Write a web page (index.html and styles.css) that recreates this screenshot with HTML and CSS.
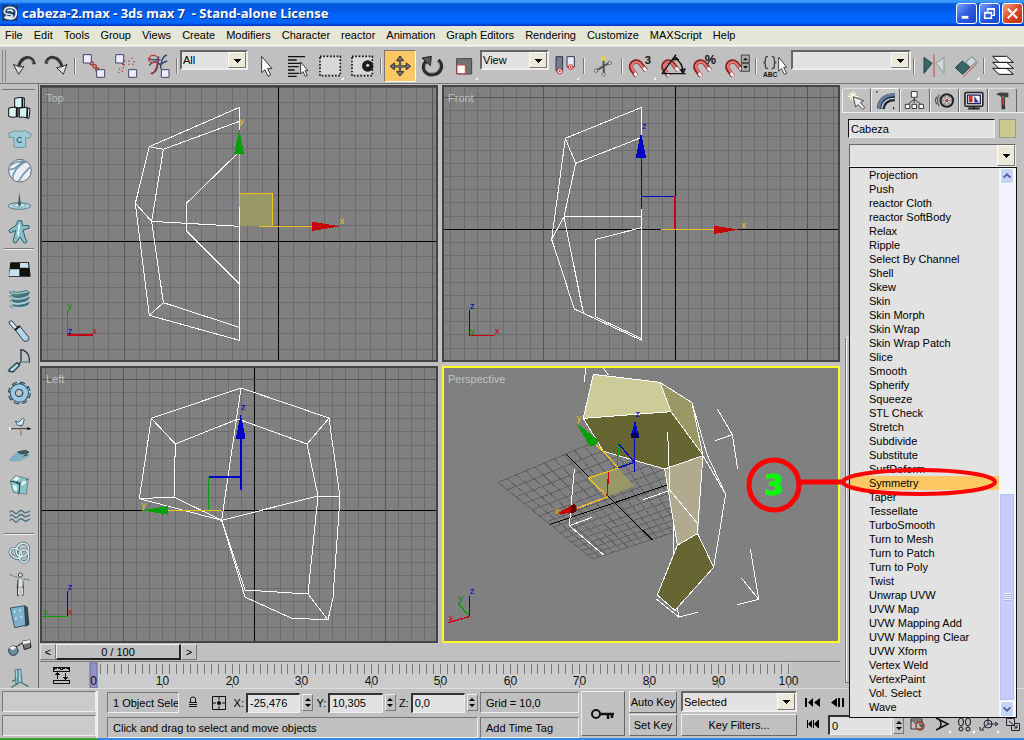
FILE: index.html
```html
<!DOCTYPE html>
<html lang="en">
<head>
<meta charset="utf-8">
<title>cabeza-2.max - 3ds max 7 - Stand-alone License</title>
<link rel="stylesheet" href="styles.css">
</head>
<body>
<div class="app">
  <header class="titlebar">
    <svg class="logo" viewBox="0 0 48 48" aria-hidden="true"><rect width="48" height="48" rx="4" fill="#1d3f6c"/><path d="M40 14C34 4 8 4 7 20c0 12 22 4 24 12 0 6-12 6-20 0M41 14c4 8 3 24-10 27-10 2-18 0-24-5M16 19c4-6 16-5 16 3" fill="none" stroke="#e4f1f5" stroke-width="5"/></svg>
    <h1 class="caption">cabeza-2.max - 3ds max 7 &nbsp;- Stand-alone License</h1>
    <div class="winbuttons">
      <button class="win" aria-label="Minimize"><svg viewBox="0 0 20 20"><path d="M5 14h7" stroke="#fff" stroke-width="3"/></svg></button>
      <button class="win" aria-label="Restore"><svg viewBox="0 0 20 20"><path d="M8 8V5h7v7h-3M5 9h7v6H5zM5 9.500h7M8 5.500h7" fill="none" stroke="#fff" stroke-width="1.500"/></svg></button>
      <button class="win win-close" aria-label="Close"><svg viewBox="0 0 20 20"><path d="M5 5l10 10M15 5L5 15" stroke="#fff" stroke-width="2.200"/></svg></button>
    </div>
  </header>

  <nav class="menubar">
    <a href="#">File</a><a href="#">Edit</a><a href="#">Tools</a><a href="#">Group</a><a href="#">Views</a><a href="#">Create</a><a href="#">Modifiers</a><a href="#">Character</a><a href="#">reactor</a><a href="#">Animation</a><a href="#">Graph Editors</a><a href="#">Rendering</a><a href="#">Customize</a><a href="#">MAXScript</a><a href="#">Help</a>
  </nav>

  <div class="toolbar">
    <span class="handle"></span>
    <button class="tool" aria-label="Undo"><svg viewBox="24 147 96 96"><path d="M103 190C98 160 64 164 56 197" fill="none" stroke="#333" stroke-width="10"/><path d="M99 184C91 168 70 172 62 197" fill="none" stroke="#aaa" stroke-width="3"/><path d="M40 190l16 30 16-24-12 2z" fill="#ddd" stroke="#333" stroke-width="3"/></svg></button>
    <button class="tool" aria-label="Redo"><svg viewBox="120 147 96 96"><path d="M138 188c6-28 38-24 48 9" fill="none" stroke="#333" stroke-width="10"/><path d="M141 184c9-16 30-12 39 10" fill="none" stroke="#aaa" stroke-width="3"/><path d="M170 200l20 20 11-30-14 7z" fill="#ddd" stroke="#333" stroke-width="3"/></svg></button>
    <span class="sep"></span>
    <button class="tool" aria-label="Select and Link"><svg viewBox="234 147 96 96"><g fill="none" stroke="#a33" stroke-width="4"><circle cx="275" cy="187" r="5"/><circle cx="284" cy="196" r="5"/><circle cx="292" cy="206" r="5"/></g><g fill="#eef" stroke="#446" stroke-width="3"><path d="M250 161h24v25h-24zM290 206h24v23h-24z"/></g></svg></button>
    <button class="tool" aria-label="Unlink Selection"><svg viewBox="330 147 96 96"><path d="M374 192c-12-2-8-14 2-12" fill="none" stroke="#a33" stroke-width="4"/><path d="M385 180h4m5-8h4m2 10h5m-20 8h4m8 0h4m-44 14h4m4 6h4m-15 4h4m10-14h4" stroke="#b44" stroke-width="4"/><g fill="#eef" stroke="#446" stroke-width="3"><path d="M347 161h24v25h-24zM386 206h24v23h-24z"/></g></svg></button>
    <button class="tool" aria-label="Bind to Space Warp"><svg viewBox="426 147 96 96"><path d="M447 194c25-30 30 10 38-10c2-12 8-20 16-22M452 217c26 0 20-35 24-51" fill="none" stroke="#247" stroke-width="4"/><path d="M446 172c10 10 28 0 36 6M484 204c-8-14 6-20 18-24" fill="none" stroke="#346" stroke-width="4"/><ellipse cx="460" cy="174" rx="14" ry="11" fill="none" stroke="#c33" stroke-width="4"/><path d="M472 182c0 20-8 30-16 38" fill="none" stroke="#b33" stroke-width="4"/><path d="M484 206h23v23h-23z" fill="#eef" stroke="#446" stroke-width="3"/></svg></button>
    <span class="sep"></span>
    <span class="combo combo-filter"><select aria-label="Selection Filter"><option>All</option></select></span>
    <button class="tool" aria-label="Select Object"><svg viewBox="750 147 96 96"><path d="M785 166v49l10-9 9 20 8-4-9-19h13z" fill="#fff" stroke="#333" stroke-width="3"/></svg></button>
    <button class="tool" aria-label="Select by Name"><svg viewBox="846 147 96 96"><path d="M864 167h51M864 177h26M864 187h42M864 197h32M864 207h20M864 217h34M864 226h26" stroke="#111" stroke-width="4"/><path d="M902 183v36l7-7 7 14 6-3-7-14h9z" fill="#fff" stroke="#333" stroke-width="3"/></svg></button>
    <button class="tool" aria-label="Rectangular Selection Region"><svg viewBox="942 147 96 96"><path d="M960 166h61v58h-61z" fill="#d8d8d8" stroke="#111" stroke-width="5" stroke-dasharray="5 5"/><path d="M1032 228v8h-9z" fill="#fff"/></svg></button>
    <button class="tool" aria-label="Window / Crossing"><svg viewBox="1038 147 96 96"><path d="M1056 166h61v58h-61z" fill="#d8d8d8" stroke="#111" stroke-width="5" stroke-dasharray="5 5"/><circle cx="1103" cy="195" r="17" fill="#1a1a1a"/><circle cx="1103" cy="193" r="5" fill="#ccc"/></svg></button>
    <span class="sep"></span>
    <button class="tool tool-active" aria-label="Select and Move" aria-pressed="true"><svg viewBox="14 149 96 96"><path d="M62 170v55M34 198h57" stroke="#333" stroke-width="7"/><path d="M51 180l11-15 12 15zM51 215l11 14 12-14zM44 187l-14 11 14 11zM82 187l14 11-14 11z" fill="#777" stroke="#222" stroke-width="3"/><path d="M62 178v40M42 198h42" stroke="#999" stroke-width="2"/></svg></button>
    <button class="tool" aria-label="Select and Rotate"><svg viewBox="108 147 96 96"><path d="M139 181c-17 18-5 40 17 40 28-1 36-28 19-44" fill="none" stroke="#2b2b2b" stroke-width="11"/><path d="M138 188c-7 17 3 28 17 28 19 0 29-17 20-34" fill="none" stroke="#999" stroke-width="3"/><path d="M126 171l28-5-3 28z" fill="#555" stroke="#222" stroke-width="3"/></svg></button>
    <button class="tool" aria-label="Select and Scale"><svg viewBox="204 147 96 96"><path d="M230 173h45v46h-45z" fill="#737373" stroke="#444" stroke-width="3"/><path d="M231 192h25v26h-25z" fill="#fff" stroke="#c44" stroke-width="3"/><path d="M294 228v8h-8z" fill="#fff"/></svg></button>
    <span class="combo combo-coord"><select aria-label="Reference Coordinate System"><option>View</option></select></span>
    <button class="tool" aria-label="Use Pivot Point Center"><svg viewBox="509 147 96 96"><path d="M530 167h20v43h-20z" fill="#7a7a8c" stroke="#335" stroke-width="3"/><path d="M563 167h22v31h-22z" fill="#e5ebf5" stroke="#335" stroke-width="3"/><g fill="#fff" stroke="#c22" stroke-width="3"><circle cx="541" cy="211" r="8"/><circle cx="574" cy="198" r="7"/></g><circle cx="541" cy="211" r="3" fill="#c22"/><circle cx="574" cy="198" r="3" fill="#c22"/><path d="M600 228v8h-8z" fill="#fff"/></svg></button>
    <span class="sep"></span>
    <button class="tool" aria-label="Select and Manipulate"><svg viewBox="623 147 96 96"><path d="M672 176l2 44M650 209l42-25" stroke="#555" stroke-width="6"/><circle cx="671" cy="173" r="7" fill="#edcf3e"/><g fill="#ddd" stroke="#666" stroke-width="3"><circle cx="650" cy="209" r="5"/><circle cx="691" cy="186" r="5"/><circle cx="673" cy="220" r="5"/></g></svg></button>
    <span class="sep"></span>
    <button class="tool" aria-label="3D Snap Toggle"><svg viewBox="735 147 96 96"><g id="magnet" fill="none"><path d="M798 209L781 187C767 172 746 189 755 205L770 226" stroke="#7a2020" stroke-width="13"/><path d="M797 208L780 188C767 175 749 190 757 204L771 225" stroke="#e87470" stroke-width="7"/><path d="M798 209l-7-9M770 225l-6-9" stroke="#fff" stroke-width="9"/></g><text class="glyph" x="794" y="190" font-size="34">3</text><path d="M828 228v8h-8z" fill="#fff"/></svg></button>
    <button class="tool" aria-label="Angle Snap Toggle"><svg viewBox="831 147 96 96"><use href="#magnet" x="97"/><path d="M845 218h72M846 218l42-57M884 172q26 12 24 44M878 176l6-10 10 9zM902 206l7 11 6-13z" fill="none" stroke="#111" stroke-width="4"/></svg></button>
    <button class="tool" aria-label="Percent Snap Toggle"><svg viewBox="927 147 96 96"><use href="#magnet" x="193"/><text class="glyph" x="974" y="189" font-size="38">%</text></svg></button>
    <button class="tool" aria-label="Spinner Snap Toggle"><svg viewBox="1023 147 96 96"><use href="#magnet" x="289"/><path d="M1084 162h24v23h-24zM1084 188h24v23h-24z" fill="#aaa" stroke="#444" stroke-width="3"/><path d="M1089 178l7-8 8 8zM1089 195l7 8 8-8z" fill="#111"/></svg></button>
    <span class="sep"></span>
    <button class="tool" aria-label="Named Selection Sets"><svg viewBox="60 147 96 96"><path d="M87 166q-8 0-8 8v6q0 5-6 5 6 0 6 5v6q0 7 8 7M98 166q8 0 8 8v6q0 5 6 5-6 0-6 5v6q0 7-8 7" fill="none" stroke="#444" stroke-width="4"/><text x="72" y="229" font-size="20" class="glyph">ABC</text><path d="M119 168v43l8-8 9 17 7-3-9-18h9z" fill="#fff" stroke="#444" stroke-width="3"/></svg></button>
    <span class="combo combo-sets"><select aria-label="Named Selection Set"><option></option></select></span>
    <span class="sep"></span>
    <button class="tool" aria-label="Mirror"><svg viewBox="531 147 96 96"><path d="M552 169v48l24-30z" fill="#386866" stroke="#243c3c" stroke-width="3"/><path d="M612 169v48l-24-30z" fill="#ccd8da" stroke="#899" stroke-width="3"/><path d="M582 160v68" stroke="#c44" stroke-width="3"/></svg></button>
    <button class="tool" aria-label="Align"><svg viewBox="627 147 96 96"><path d="M677 184l18-17 15 14-19 17z" fill="#ccd8da" stroke="#677" stroke-width="3"/><path d="M646 200l21-20 22 20-21 20z" fill="#386866" stroke="#243c3c" stroke-width="3"/><path d="M671 227l42-42" stroke="#c44" stroke-width="3"/><path d="M719 228v8h-10z" fill="#fff"/></svg></button>
    <span class="sep"></span>
    <button class="tool" aria-label="Layer Manager"><svg viewBox="745 147 96 96"><g fill="#fff" stroke="#111" stroke-width="3"><path d="M762 202h42l20 18h-43z"/><path d="M762 184h42l20 18h-43z"/><path d="M762 166h42l20 18h-43z"/></g></svg></button>
  </div>

  <main class="workspace">
    <div class="sidebar">
      <button class="side" aria-label="Rigid Body Collection"><svg viewBox="10 21 93 93"><g fill="#d6f2f5" stroke="#111" stroke-width="3"><path d="M42 40l18-3 11 2v28l-19 2-10-2zM24 69l20-3 8 3v26l-18 2-10-3zM56 69l22-2 10 4-3 29-19-4-10 1z"/></g><path d="M65 38v29M48 69v27M80 69l-1 29" stroke="#111" stroke-width="5"/></svg></button>
      <button class="side" aria-label="Cloth Collection"><svg viewBox="10 114 93 93"><path d="M24 144l20-7q12 5 28 0l20 10-5 13-12-2v28q-18 4-35 0v-29l-14 1z" fill="#9dcbd6" stroke="#51838e" stroke-width="2"/><path d="M64 159q-13-6-15 6 2 12 15 5" fill="none" stroke="#417583" stroke-width="4"/></svg></button>
      <button class="side" aria-label="Soft Body Collection"><svg viewBox="10 207 93 93"><circle cx="58" cy="257" r="34" fill="#e8eef4" stroke="#667" stroke-width="3"/><path d="M28 242q22-18 50-10M36 282q0-30 37-52M53 290q13-23 34-43M68 226q-23 30-44 28" fill="none" stroke="#7396aa" stroke-width="5"/></svg></button>
      <button class="side" aria-label="Water"><svg viewBox="10 300 93 93"><ellipse cx="56" cy="363" rx="34" ry="10" fill="#a7d2df" stroke="#58808b" stroke-width="3"/><ellipse cx="56" cy="361" rx="18" ry="5" fill="#e8f5f6" stroke="#58808b" stroke-width="2"/><path d="M56 322l-4 40h9z" fill="#355964"/></svg></button>
      <button class="side" aria-label="Deforming Mesh"><svg viewBox="10 393 93 93"><path d="M52 407h11l2 14 20 1v8l-18 5 6 22 6 14-8 4-13-18-13 18-8-5 8-34-16 8-5-8 22-15z" fill="#88bcc9" stroke="#365d69" stroke-width="3"/><path d="M56 418l-4 35" stroke="#dff" stroke-width="5"/></svg></button>
      <span class="side-sep"></span>
      <button class="side" aria-label="Plane"><svg viewBox="10 504 93 93"><path d="M29 532h56l5 43H24z" fill="#111"/><path d="M58 534h24l2 14H58zM28 553h28v20H25z" fill="#c9e1ee"/></svg></button>
      <button class="side" aria-label="Spring"><svg viewBox="10 597 93 93"><g fill="none" stroke="#46717c" stroke-width="10"><path d="M82 619c-25 9-52 7-51-1M82 619c2 16-48 22-51 12M82 635c-2 14-48 18-51 10M82 650c-2 14-48 18-51 10"/></g><g fill="none" stroke="#a8d0d6" stroke-width="4"><path d="M82 619c-25 9-52 7-51-1M82 635c-20 10-48 8-51-3M82 650c-20 10-48 8-51-4M82 663c-20 8-48 6-51-3"/></g></svg></button>
      <button class="side" aria-label="Linear Dashpot"><svg viewBox="10 690 93 93"><path d="M25 710l8-3 20 23-8 7-18-20z" fill="#cfe5ef" stroke="#244" stroke-width="3"/><path d="M44 735l13-12 28 35-4 10-11 1z" fill="#b5d5e9" stroke="#244" stroke-width="3"/><path d="M43 735l14-12" stroke="#111" stroke-width="6"/></svg></button>
      <button class="side" aria-label="Angular Dashpot"><svg viewBox="10 -42 93 93"><path d="M61 6V-31q22 3 25 28v9H61l-7 6" fill="none" stroke="#234" stroke-width="4"/><path d="M61 6h25" stroke="#b5d5e9" stroke-width="3"/><path d="M27 27l22-19 8 8-20 20-13-3z" fill="#b5d5e9" stroke="#244" stroke-width="4"/></svg></button>
      <button class="side" aria-label="Motor"><svg viewBox="10 51 93 93"><circle cx="56" cy="99" r="29" fill="none" stroke="#274b60" stroke-width="11" stroke-dasharray="14 9"/><circle cx="56" cy="99" r="28" fill="none" stroke="#9cc8e0" stroke-width="6" stroke-dasharray="12 11"/><circle cx="56" cy="99" r="20" fill="none" stroke="#274b60" stroke-width="18"/><circle cx="56" cy="99" r="19" fill="none" stroke="#9cc8e0" stroke-width="14"/><circle cx="55" cy="99" r="11" fill="#c0c0c0" stroke="#274b60" stroke-width="3"/></svg></button>
      <button class="side" aria-label="Wind"><svg viewBox="10 144 93 93"><path d="M22 206h68" stroke="#333" stroke-width="3"/><path d="M61 190v37" stroke="#a77" stroke-width="4"/><path d="M44 183l10 4 12-12 5 3-5 18H50z" fill="#cfeef2" stroke="#467" stroke-width="3"/><circle cx="27" cy="206" r="4" fill="#fff"/><path d="M80 201l11 5-11 5z"/></svg></button>
      <button class="side" aria-label="Toy Car"><svg viewBox="10 237 93 93"><path d="M25 300q14-23 39-28l19 5 3 11-26 15-30 2z" fill="#82aec2"/><path d="M51 276l24-5 10 6-22 5zM68 289q6-8 13-4" fill="#465b69" stroke="#344" stroke-width="3"/></svg></button>
      <button class="side" aria-label="Fracture"><svg viewBox="10 330 93 93"><path d="M29 364l15-17 39 10-6 46-39-6z" fill="#8ac5c6" stroke="#567" stroke-width="2"/><path d="M29 363l29 7 23-12M55 351l-7 18 10 5-4 29" fill="none" stroke="#234" stroke-width="3"/><path d="M37 359l10-10 10 4-6 11zM62 366l14-7-2 12-12 6zM36 374l12 3 2 16-11-2z" fill="#dffafa"/></svg></button>
      <button class="side" aria-label="Water Surface"><svg viewBox="10 423 93 93"><path d="M27 457q6-9 13 0t14-2q7-7 14 0t20-3M27 469q6-9 13 0t14-2q7-7 14 0t20-3M27 482q6-9 13 0t14-2q7-7 14 0t20-3" fill="none" stroke="#456f7c" stroke-width="4"/></svg></button>
      <span class="side-sep"></span>
      <button class="side" aria-label="Constraint Solver"><svg viewBox="10 534 93 93"><g fill="none" stroke="#3c606b" stroke-width="9"><ellipse cx="65" cy="570" rx="18" ry="21" transform="rotate(30 65 570)"/><ellipse cx="46" cy="580" rx="13" ry="19" transform="rotate(-60 46 580)"/><ellipse cx="70" cy="588" rx="14" ry="19"/></g><g fill="none" stroke="#d7e8ec" stroke-width="5"><ellipse cx="65" cy="570" rx="18" ry="21" transform="rotate(30 65 570)"/><ellipse cx="46" cy="580" rx="13" ry="19" transform="rotate(-60 46 580)"/><ellipse cx="70" cy="588" rx="14" ry="19"/></g></svg></button>
      <button class="side" aria-label="Rag Doll Constraint"><svg viewBox="10 627 93 93"><path d="M27 644l32 12 30 4" fill="none" stroke="#566" stroke-width="3" stroke-dasharray="6 3"/><path d="M53 659l-2 20 1 30M65 659l2 23-1 25" fill="none" stroke="#344" stroke-width="5"/><path d="M54 656h12v24H53zM52 684h4v20h-4zM63 684h4v20h-4z" fill="#ddd"/><circle cx="59" cy="645" r="6" fill="#dee" stroke="#344" stroke-width="3"/></svg></button>
      <button class="side" aria-label="Hinge Constraint"><svg viewBox="10 720 93 93"><path d="M29 744l45-7 10 57-42 9z" fill="#7fb1cc" stroke="#356" stroke-width="3"/><path d="M70 738l11 2 5 53-12 8z" fill="#304650"/><path d="M40 755h4m12-4h4m-16 25h4m12-5h4" stroke="#dff" stroke-width="5"/></svg></button>
      <button class="side" aria-label="Point-Point Constraint"><svg viewBox="10 -12 93 93"><circle cx="38" cy="47" r="14" fill="#6b8f9a" stroke="#234" stroke-width="3"/><path d="M35 33l-10 6 12 7 11-9z" fill="#eee"/><path d="M46 36l22-14" stroke="#111" stroke-width="4" stroke-dasharray="5 3"/><path d="M65 19l22-4 4 22-20 7z" fill="#777" stroke="#222" stroke-width="3"/><path d="M65 19l22-4 2 8-22 5z" fill="#eee"/></svg></button>
      <button class="side" aria-label="Prismatic Constraint"><svg viewBox="10 75 93 93"><path d="M43 99l17-3 4 39-18 6z" fill="#a8d8df" stroke="#477" stroke-width="3"/><path d="M52 98v40M59 135l25 14M52 139l-20 12M47 127l-13 6" stroke="#477" stroke-width="4"/></svg></button>
    </div>

    <div class="center">
      <div class="viewports">
        <section class="viewport">
          <h2 class="vp-label">Top</h2>
          <svg class="scene" viewBox="126 6 1182 819" preserveAspectRatio="xMidYMid slice">
            <g class="grid" data-cx="835" data-cy="469" data-step="46.2"></g>
            <path class="wire" d="M718 67L448 185 406 355 448 691 718 766V67M718 109L490 193 455 409 490 653 718 727M448 185l42 8M406 355l49 54M448 691l42-38M455 409l263 15M718 200L559 355v82L718 597"/>
            <path d="M719 325h99v99h-99z" fill="#989866"/>
            <path class="gold" d="M718 325h100v99M718 367V205M778 424h160"/>
            <path d="M718 131l-16 76h30z" fill="#00a000"/><path d="M936 410l84 14-84 14z" fill="#c80000"/>
            <text x="718" y="117" fill="#edc414">y</text><text x="1019" y="417" fill="#edc414">x</text>
            <path class="g" d="M202 750v-76"/><path class="r" d="M202 750h78"/>
            <text x="202" y="671" fill="#008c00">y</text><text x="277" y="746" fill="#c80014">x</text><text x="203" y="746" fill="#0000c8">z</text>
          </svg>
        </section>
        <section class="viewport">
          <h2 class="vp-label">Front</h2>
          <svg class="scene" viewBox="12 6 1182 819" preserveAspectRatio="xMidYMid slice">
            <g class="grid" data-cx="706" data-cy="433" data-step="39.6"></g>
            <path class="wire" d="M605 67L376 160 335 463 403 672 605 766V67M605 157L407 235 372 395 430 684M376 160l31 75M372 395h233M372 395L335 463M605 428L467 463v233L605 761"/>
            <path class="b" d="M605 373V205M605 334h101"/><path class="r" d="M705 334v98"/><path class="gold" d="M664 433h160"/>
            <path d="M603 142l-16 76h31z" fill="#0000c8"/><path d="M822 422l74 12-74 13z" fill="#c80000"/>
            <text x="606" y="132" fill="#0000c8">z</text><text x="904" y="428" fill="#edc414">x</text>
            <path class="b" d="M88 751v-75"/><path class="r" d="M88 751h78"/>
            <text x="90" y="671" fill="#0000c8">z</text><text x="164" y="747" fill="#c80014">x</text><text x="90" y="747" fill="#008c00">y</text>
          </svg>
        </section>
        <section class="viewport">
          <h2 class="vp-label">Left</h2>
          <svg class="scene" viewBox="126 24 1182 819" preserveAspectRatio="xMidYMid slice">
            <g class="grid" data-cx="763" data-cy="451" data-step="39.2"></g>
            <path class="wire" d="M454 175L723 84 987 174 1020 411 999 714 984 780 873 774 735 711 665 481 418 416zM526 252L714 177 921 252 954 408 924 702 735 690 665 481 522 411zM454 175l72 77M418 416l104-5 143 70M723 84L665 481l289-73h66M987 174l-66 78M924 702l60 78"/>
            <path class="b" d="M723 390V230M723 351h-97"/><path class="g" d="M626 351v100"/><path class="gold" d="M500 451h165"/>
            <path d="M722 162l-15 76h30z" fill="#0000c8"/><path d="M424 451l80-13v26z" fill="#00a000"/>
            <text x="723" y="151" fill="#0000c8">z</text><text x="424" y="443" fill="#edc414">y</text>
            <path class="b" d="M202 769v-76"/><path class="g" d="M202 769h-72"/>
            <text x="203" y="689" fill="#0000c8">z</text><text x="130" y="765" fill="#008c00">y</text><text x="203" y="765" fill="#c80014">x</text>
          </svg>
        </section>
        <section class="viewport viewport-active">
          <h2 class="vp-label">Perspective</h2>
          <svg class="scene" viewBox="12 9 1182 819" preserveAspectRatio="xMidYMid slice">
            <g class="persp-grid"></g>
            <path class="axis" d="M378 267L638 526M331 478L681 360"/>
            <path d="M445 339l91-30 46 54-81 33z" fill="#989866"/>
            <path class="wire" d="M403 312L388 482l68-25M388 482l103 88"/>
            <path d="M660 52l96 61 33 157-96-130z" fill="#999966"/>
            <path d="M460 28l200 24 33 88-263 20z" fill="#cccc99"/>
            <path d="M430 160l263-20 96 130-115 42-184-53z" fill="#666633"/>
            <path d="M674 312l115-40-14 234-63 35z" fill="#b2aa8e"/>
            <path d="M712 541l60-37 49 103-116 129-53-46z" fill="#666633"/>
            <path class="wire" d="M436 9l-2 41M490 9l16 22M460 28l200 24 33 88-263 20zM660 52l96 61 45 155 56 120-36 219-49-103 17-234-96-130M756 113l33 159 68 116M430 160l60 99 184 53 115-40M674 312l38 229 60-35M712 541l-60 149 53 46 116-129M683 201l7 175-80 28M690 376l83 100M700 480v90M649 702l67 54 58-14M716 756l-4-30M832 132l45 77-51 18M877 209l16 103M931 551l25 152-64 16M956 703l-52-64"/>
            <path class="gold" d="M468 237l68 72-91 30 56 57-96 36"/><path class="g" d="M536 236l-4 67"/><path class="r" d="M506 322l-5 71"/><path class="b" d="M536 236l47 56v-74M583 292v28M583 292l-48 17"/>
            <path d="M409 174l40 70q20 0 27-17z" fill="#00a000"/><path d="M585 164l-13 53q12 5 25 0z" fill="#0000c8"/><path d="M572 204h25v14q-13 4-25 0z" fill="#000064"/><path d="M345 449l58-33q12 12 4 26z" fill="#c80000"/><path d="M403 416q10 10 4 26l-14 2q-4-14 2-24z" fill="#640000"/>
            <text x="586" y="155" fill="#0000c8">z</text><text x="410" y="167" fill="#edc414">y</text><text x="344" y="446" fill="#edc414">x</text>
            <path class="b" d="M88 755v-63"/><path class="g" d="M88 755l-34-42"/><path class="r" d="M88 755l-64 18"/>
            <text x="89" y="688" fill="#0000c8">z</text><text x="55" y="708" fill="#008c00">y</text><text x="26" y="767" fill="#c80014">x</text>
          </svg>
        </section>
      </div>
      <div class="slider">
        <button class="step" aria-label="Previous frame">&lt;</button><button class="thumb">0 / 100</button><button class="step" aria-label="Next frame">&gt;</button>
      </div>
      <div class="timeline">
        <svg viewBox="40 662 800 26" preserveAspectRatio="xMinYMid meet" role="img" aria-label="Time ruler">
          <rect x="98" y="662" width="693" height="26" fill="#cbcbcb"/>
          <g class="curve"><path d="M53.500 671.500v-4h16v4zM53.500 669.500l4-2 4 2 4-2 4 2M53.500 683v-3h16v3zM57.500 679v-6m-2 2l2-2 2 2M65.500 673v6m-2-2l2 2 2-2"/></g>
          <rect x="90" y="663" width="7" height="25" fill="#9292c8" stroke="#6a6aa4"/>
          <g class="ticks"></g>
        </svg>
      </div>
    </div>

    <aside class="command">
      <div class="tabs" role="tablist">
        <button class="tab" role="tab" aria-label="Create"><svg viewBox="312 264 84 72"><path d="M342 271v32M326 287h32M332 277l20 20M352 277l-20 20" stroke="#fffbe0" stroke-width="4"/><path d="M343 288l8 32 8-7 14 15 7-6-14-15 10-6z" fill="#eee" stroke="#444" stroke-width="3"/></svg></button>
        <button class="tab tab-on" role="tab" aria-label="Modify" aria-selected="true"><svg viewBox="396 264 84 72"><path d="M423 326q4-36 44-36" fill="none" stroke="#20262f" stroke-width="25"/><path d="M417 324q4-42 50-42" fill="none" stroke="#687f9f" stroke-width="9"/><path d="M426 325q4-32 40-32" fill="none" stroke="#c8d4e4" stroke-width="4"/><path d="M411 270v6M463 321v6" stroke="#222" stroke-width="4"/></svg></button>
        <button class="tab" role="tab" aria-label="Hierarchy"><svg viewBox="484 264 84 72"><path d="M525 292v16M525 296l-22 18M525 296l24 18" stroke="#333" stroke-width="3"/><path d="M516 272h18v18h-18zM497 312h14v13h-14zM518 312h14v13h-14zM540 312h14v13h-14z" fill="#fff" stroke="#333" stroke-width="3"/></svg></button>
        <button class="tab" role="tab" aria-label="Motion"><svg viewBox="570 264 84 72"><path d="M587 288q-8 12 0 24M595 282q-10 18 0 36" fill="none" stroke="#333" stroke-width="3"/><circle cx="619" cy="300" r="20" fill="#999" stroke="#222" stroke-width="6"/><path d="M619 286v28M606 293l26 14M632 293l-26 14" stroke="#eee" stroke-width="3"/><circle cx="619" cy="300" r="5" fill="#b33"/></svg></button>
        <button class="tab" role="tab" aria-label="Display"><svg viewBox="656 264 84 72"><rect x="671" y="275" width="56" height="43" rx="4" fill="#ddd" stroke="#222" stroke-width="5"/><path d="M679 283h40v27h-40z" fill="#fff" stroke="#225" stroke-width="4"/><path d="M683 286h12v20h-12z" fill="#c33"/><path d="M700 306v-20l15 20z" fill="#33a"/><path d="M681 325h36M699 319v6" stroke="#222" stroke-width="6"/></svg></button>
        <button class="tab" role="tab" aria-label="Utilities"><svg viewBox="741 264 84 72"><path d="M763 283q3-9 14-8l24 1v14h-12l-4-3-5 3-10-7z" fill="#444"/><path d="M779 290h11l1 37h-11z" fill="#333"/><path d="M782 292h5l1 22h-6z" fill="#d33"/></svg></button>
      </div>
      <div class="panel">
        <div class="name-row"><input class="name" type="text" value="Cabeza" aria-label="Object name"><button class="swatch" aria-label="Object color"></button></div>
        <div class="mod">
          <span class="combo combo-mod"><select aria-label="Modifier List"><option></option></select></span>
          <div class="dropdown">
            <ul class="modlist" role="listbox" aria-label="Modifiers">
              <li role="option">Projection</li><li role="option">Push</li><li role="option">reactor Cloth</li><li role="option">reactor SoftBody</li><li role="option">Relax</li><li role="option">Ripple</li><li role="option">Select By Channel</li><li role="option">Shell</li><li role="option">Skew</li><li role="option">Skin</li><li role="option">Skin Morph</li><li role="option">Skin Wrap</li><li role="option">Skin Wrap Patch</li><li role="option">Slice</li><li role="option">Smooth</li><li role="option">Spherify</li><li role="option">Squeeze</li><li role="option">STL Check</li><li role="option">Stretch</li><li role="option">Subdivide</li><li role="option">Substitute</li><li role="option">SurfDeform</li><li role="option" class="on" aria-selected="true">Symmetry</li><li role="option">Taper</li><li role="option">Tessellate</li><li role="option">TurboSmooth</li><li role="option">Turn to Mesh</li><li role="option">Turn to Patch</li><li role="option">Turn to Poly</li><li role="option">Twist</li><li role="option">Unwrap UVW</li><li role="option">UVW Map</li><li role="option">UVW Mapping Add</li><li role="option">UVW Mapping Clear</li><li role="option">UVW Xform</li><li role="option">Vertex Weld</li><li role="option">VertexPaint</li><li role="option">Vol. Select</li><li role="option">Wave</li><li role="option">XForm</li>
            </ul>
            <div class="scroll">
              <button class="sbtn" aria-label="Scroll up"><svg viewBox="0 0 14 14"><path d="M3 9l4-4 4 4" fill="none" stroke="#4d6185" stroke-width="2"/></svg></button>
              <span class="track"></span>
              <span class="sthumb"><i></i></span>
              <button class="sbtn" aria-label="Scroll down"><svg viewBox="0 0 14 14"><path d="M3 5l4 4 4-4" fill="none" stroke="#4d6185" stroke-width="2"/></svg></button>
            </div>
          </div>
          <svg class="callout" viewBox="745 455 255 60"><circle cx="774" cy="486" r="25" fill="none" stroke="#f00" stroke-width="5"/><path d="M800 483h46" stroke="#f00" stroke-width="5"/><ellipse cx="919" cy="483" rx="76" ry="12" fill="none" stroke="#f00" stroke-width="4"/><text x="774" y="496" text-anchor="middle">3</text></svg>
        </div>
        <div class="rollout"></div>
      </div>
    </aside>
  </main>

  <footer class="status">
    <div class="listener"><span class="well"></span><span class="well"></span></div>
    <div class="info">
      <div class="info-row">
        <span class="well sel">1 Object Sele</span>
        <button class="ico" aria-label="Selection lock"><svg viewBox="0 0 24 20"><path d="M9.500 9V6q0-2 2.500-2t2.500 2v3" fill="none" stroke="#111"/><path d="M8 9.500h8M8 11.500h8M8 13.500h8" stroke="#111"/></svg></button>
        <button class="ico" aria-label="Absolute mode"><svg viewBox="0 0 24 20"><path d="M5.500 3.500h13v13h-13zM12 4v3M12 13v3M6 10h3M15 10h3" fill="none" stroke="#111"/><circle cx="12" cy="10" r="2"/></svg></button>
        <label for="cx">X:</label><input id="cx" class="num" value="-25,476"><span class="spin"></span>
        <label for="cy">Y:</label><input id="cy" class="num" value="10,305"><span class="spin"></span>
        <label for="cz">Z:</label><input id="cz" class="num" value="0,0"><span class="spin"></span>
        <span class="well gridinfo">Grid = 10,0</span>
      </div>
      <div class="info-row info-low">
        <span class="well prompt">Click and drag to select and move objects</span>
        <span class="well gridinfo">Add Time Tag</span>
      </div>
    </div>
    <button class="btn keybtn" aria-label="Set Keys"><svg viewBox="0 0 26 14"><circle cx="6" cy="7" r="4" fill="none" stroke="#111" stroke-width="2"/><path d="M10 7h14M18 7v5M22 7v4" stroke="#111" stroke-width="2.500"/></svg></button>
    <div class="stack keys"><button class="btn">Auto Key</button><button class="btn">Set Key</button></div>
    <div class="stack filters">
      <span class="combo combo-key"><select aria-label="Key set"><option>Selected</option></select></span>
      <button class="btn">Key Filters...</button>
    </div>
    <div class="stack play">
      <div class="play-row">
        <button class="ico" aria-label="Go to Start"><svg viewBox="0 0 24 20"><path d="M4 6h2v9H4zM12 6v9l-5-4.500zM19 6v9l-6-4.500z"/></svg></button>
        <button class="ico" aria-label="Previous Frame"><svg viewBox="0 0 24 20"><path d="M12 6v9l-6-4.500zM13 6h2v9h-2zM17 6h2v9h-2z"/></svg></button>
      </div>
      <div class="play-row">
        <button class="ico" aria-label="Key Mode Toggle"><svg viewBox="0 0 24 20"><path d="M6 5h1v8H6zM11 5v8L7 9zM12 5h1v8h-1zM17 5v8l-4-4zM17 5h1v8h-1z"/></svg></button>
        <input class="num frame" value="0" aria-label="Current frame"><span class="spin"></span>
        <button class="ico" aria-label="Time Configuration"><svg viewBox="0 0 24 20"><path d="M6 4h11v10H6zM6 6h11M9 8h3" fill="none" stroke="#333"/><circle cx="15" cy="11" r="4" fill="none" stroke="#a33" stroke-width="1.500"/><path d="M15 8v3h3" stroke="#333" fill="none"/></svg></button>
        <button class="ico" aria-label="Field of View"><svg viewBox="0 0 24 20"><path d="M7 3l12 6-12 6M10 4q4 5 0 10" fill="none" stroke="#111" stroke-width="1.500"/><path d="M22 15v3h-3z" fill="#fff"/></svg></button>
        <button class="ico" aria-label="Walk Through"><svg viewBox="0 0 24 20"><g fill="none" stroke="#111"><ellipse cx="8" cy="7" rx="2.500" ry="4"/><ellipse cx="15" cy="7" rx="2.500" ry="4"/><circle cx="8" cy="14" r="2"/><circle cx="15" cy="14" r="2"/></g><path d="M22 15v3h-3z" fill="#fff"/></svg></button>
        <button class="ico" aria-label="Arc Rotate"><svg viewBox="0 0 24 20"><circle cx="11" cy="9" r="4" fill="none" stroke="#223"/><path d="M11 3v6l-6 5M3 12v3h4M11 9h9M18 7l3 2-3 2" fill="none" stroke="#223"/><path d="M22 15v3h-3z" fill="#fff"/></svg></button>
        <button class="ico" aria-label="Maximize Viewport"><svg viewBox="0 0 24 20"><path d="M5.500 3.500h8v7h-8zM13.500 8.500h5v7h-8v-5M8 6l8 7M16 10v3h-3" fill="none" stroke="#223"/></svg></button>
      </div>
    </div>
  </footer>
  <div class="taskbar"></div>
</div>
<script src="scene.js"></script>
</body>
</html>
```
FILE: styles.css
```css
* { box-sizing: border-box; }
body { margin: 0; background: #c0c0c0; color: #000; font: 11px/14px "Liberation Sans", Arial, sans-serif; }
button, input, select { font: inherit; color: inherit; margin: 0; padding: 0; border: 0; border-radius: 0; background: none; }
svg { display: block; }
h1, h2, ul { margin: 0; padding: 0; font: inherit; }
.app { display: flex; flex-direction: column; min-height: 100vh; overflow: hidden; }

.titlebar { display: flex; align-items: center; gap: 4px; height: 26px; padding: 0 1px 0 2px; background: linear-gradient(#3c9aff 0 2px, #0058d8 4px, #0058e6 10px, #0066ff 16px 23px, #0038c8 25px); }
.logo { width: 16px; height: 16px; }
.caption { flex: 1; color: #fff; font: bold 13px/20px "Noto Sans", "Open Sans", sans-serif; text-shadow: 1px 1px #0a2a80; white-space: nowrap; }
.winbuttons { display: flex; gap: 2px; }
.win { width: 21px; height: 21px; border: 1px solid #fff; border-radius: 3px; background: linear-gradient(135deg, #7ba2f4, #2a5ae0 50%, #1c48cc); }
.win-close { background: linear-gradient(135deg, #f0a088, #dc4a26 50%, #b83010); }

.menubar { display: flex; gap: 11px; height: 20px; padding: 2px 5px; background: #e6e6d6; line-height: 15px; border-bottom: 1px solid #f8f8f0; }
.menubar a { color: #000; text-decoration: none; white-space: nowrap; }

.toolbar { display: flex; height: 38px; padding: 3px 5px 0 0; border-bottom: 1px solid #777; border-top: 1px solid #ddd; }
.handle { width: 4px; height: 32px; margin: 0 2px; border: 1px solid #888; border-width: 0 1px; }
.tool { flex: none; width: 32px; height: 32px; }
.tool svg { width: 32px; height: 32px; }
.tool-active { background: #ffc864; border: 1px solid #777; border-right-color: #fff; border-bottom-color: #fff; }
.tool-active svg { width: 30px; height: 30px; }
.glyph { font-family: "Liberation Sans", Arial, sans-serif; font-weight: bold; fill: #111; }
.sep { flex: none; width: 6px; height: 16px; margin-top: 8px; background: linear-gradient(90deg, transparent 2px, #777 2px 3px, #eee 3px 4px, transparent 4px); }

.combo { position: relative; display: block; flex: none; height: 20px; border: 2px solid #777; border-color: #666 #eee #eee #666; background: #e2e2e2; }
.combo select { appearance: none; display: block; width: 100%; height: 100%; padding: 0 18px 0 1px; outline: 0; }
.combo::after { content: ""; position: absolute; top: 0; right: 0; bottom: 0; width: 16px; border: 1px solid #fff; border-color: #fff #777 #777 #fff; background: linear-gradient(#000, #000) 50% 6px / 7px 1px no-repeat, linear-gradient(#000, #000) 50% 7px / 5px 1px no-repeat, linear-gradient(#000, #000) 50% 8px / 3px 1px no-repeat, linear-gradient(#000, #000) 50% 9px / 1px 1px no-repeat, #ece9d8; pointer-events: none; }
.combo-filter { width: 68px; margin-right: 2px; }
.combo-coord { width: 69px; }
.combo-sets { flex: 1; }

.workspace { flex: 1; display: grid; grid-template-columns: 40px minmax(0, 1fr) 184px; min-height: 0; }
.sidebar { display: flex; flex-direction: column; align-items: center; width: 39px; height: 0; min-height: 100%; padding-top: 8px; overflow: hidden; border-right: 1px solid #666; background: linear-gradient(#777, #777) 2px 5px / 33px 1px no-repeat; }
.side { flex: none; width: 31px; height: 31px; }
.side svg { width: 31px; height: 31px; }
.side-sep { flex: none; width: 30px; height: 6px; background: linear-gradient(transparent 1px, #777 1px 2px, #eee 2px 3px, transparent 3px); }

.center { display: grid; grid-template-rows: minmax(0, 1fr) 18px 27px; min-width: 0; }
.viewports { display: grid; grid-template: repeat(2, minmax(0, 1fr)) / repeat(2, minmax(0, 1fr)); gap: 4px; padding-top: 1px; }
.viewport { position: relative; border: 2px solid #444; background: #808080; overflow: hidden; }
.viewport-active { border-color: #ffff28; }
.vp-label { position: absolute; left: 4px; top: 4px; z-index: 1; color: #c0c0c0; line-height: 14px; }
.scene { position: absolute; inset: 0; width: 100%; height: 100%; shape-rendering: crispEdges; }
.scene text { font: 28px "Liberation Sans", Arial, sans-serif; }
.wire, .gold, .r, .g, .b, .axis, .minor, .major, .plane { fill: none; stroke-width: 3; }
.gold, .r, .g, .b { stroke-width: 4; }
.wire { stroke: #fff; }
.gold { stroke: #f0c020; }
.r { stroke: #c80014; }
.g { stroke: #00a000; }
.b { stroke: #0000c8; }
.axis { stroke: #000; }
.minor { stroke: #6c6c6c; }
.major { stroke: #555; }
.plane { stroke: #626262; }

.slider { display: flex; align-items: stretch; padding: 1px 0; }
.step { width: 16px; border: 1px solid #ddd; border-right-color: #777; border-bottom-color: #777; line-height: 12px; }
.thumb { width: 125px; border: 1px solid #eee; border-right: 2px solid #222; border-bottom: 2px solid #222; line-height: 12px; }
.timeline { border-top: 1px solid #777; }
.timeline svg { width: 100%; height: 26px; }
.ticks { stroke: #777; shape-rendering: crispEdges; }
.ticks text { fill: #111; stroke: none; font-size: 12px; text-anchor: middle; }
.curve path { fill: none; stroke: #111; shape-rendering: crispEdges; }

.command { display: flex; flex-direction: column; padding: 4px 0 0 2px; min-width: 0; }
.tabs { display: flex; padding-right: 7px; border-bottom: 1px solid #eee; }
.tab { flex: 1; height: 24px; border-left: 1px solid #eee; border-right: 1px solid #666; border-top: 1px solid #ddd; border-radius: 3px 3px 0 0; }
.tab svg { width: 100%; height: 23px; }
.tab-on { border-top-color: #fff; background: #c8c8c8; }
.panel { flex: 1; display: flex; flex-direction: column; padding: 6px 8px 1px 6px; }
.name-row { display: flex; gap: 4px; }
.name { flex: 1; min-width: 0; height: 19px; padding: 0 2px; border: 1px solid #111; border-right-color: #eee; border-bottom-color: #eee; background: #e2e2e2; }
.swatch { width: 17px; height: 19px; background: #c8c890; border: 1px solid #999; }
.mod { position: relative; margin: 6px 0 0 1px; }
.combo-mod { height: 23px; border-width: 1px; }
.combo-mod::after { background-position: 50% 8px, 50% 9px, 50% 10px, 50% 11px, 0 0; }
.dropdown { position: absolute; z-index: 3; top: 23px; left: 0; right: -1px; display: flex; max-height: 551px; overflow: hidden; border: 1px solid #111; background: #e2e2e2; }
.modlist { flex: 1; list-style: none; }
.modlist li { height: 14px; padding-left: 19px; line-height: 14px; white-space: nowrap; }
.modlist .on { background: #ffc864; }
.scroll { display: flex; flex-direction: column; width: 17px; padding: 0 2px 0 1px; background: #f4f4fb; }
.sbtn { flex: none; height: 16px; border: 1px solid #fff; border-radius: 2px; background: #c4d4fc; }
.track { flex: 310; }
.sthumb { flex: 204; display: flex; align-items: center; justify-content: center; margin-bottom: 1px; border: 1px solid #b4c4f4; background: #c8ccfa; }
.sthumb i { width: 7px; height: 8px; background: repeating-linear-gradient(#eef 0 1px, #a8b8e8 1px 2px); }
.callout { position: absolute; z-index: 4; top: 310px; left: -104px; width: 255px; height: 60px; pointer-events: none; }
.callout text { fill: #0f0; stroke: #0f0; font: bold 28px "DejaVu Sans", sans-serif; }
.rollout { flex: 1; margin: 170px 0 4px -3px; border: 1px solid #777; border-top-color: #eee; box-shadow: inset 1px 0 #eee; }

.status { display: flex; height: 50px; gap: 4px; border-top: 1px solid #ddd; padding-top: 2px; }
.well { display: block; border: 1px solid #777; border-right-color: #eee; border-bottom-color: #eee; white-space: nowrap; overflow: hidden; }
.listener { display: flex; flex-direction: column; gap: 3px; width: 98px; padding: 0 0 2px 2px; border-right: 2px solid #eee; }
.listener .well { flex: 1; background: #cbcbcb; }
.info { flex: 1; min-width: 0; padding: 1px 0 0 5px; display: flex; flex-direction: column; gap: 4px; }
.info-row { display: flex; align-items: center; height: 21px; gap: 2px; }
.info-row .well { height: 21px; padding: 3px 5px; }
.sel { width: 72px; flex: none; }
.info .ico { width: 24px; }
.info label { width: 11px; text-align: right; }
.num { flex: 1; min-width: 0; height: 20px; padding: 0 2px; border: 2px solid #333; border-right: 1px solid #eee; border-bottom: 1px solid #eee; background: #e2e2e2; }
.spin { flex: none; display: flex; flex-direction: column; align-items: center; justify-content: space-between; width: 11px; height: 17px; padding: 3px 0; border: 1px solid #eee; border-right-color: #777; border-bottom-color: #777; }
.spin::before, .spin::after { content: ""; border: 3px solid transparent; border-top: 0; border-bottom: 3px solid #000; }
.spin::after { border-bottom: 0; border-top: 3px solid #000; }
.gridinfo { width: 99px; flex: none; }
.prompt { flex: 1; }
.ico { flex: none; width: 24px; height: 20px; }
.ico svg { width: 24px; height: 20px; }
.btn { border: 1px solid #eee; border-right-color: #666; border-bottom-color: #666; white-space: nowrap; }
.keybtn { width: 44px; height: 45px; margin-left: -2px; display: grid; place-items: center; }
.keybtn svg { width: 26px; height: 14px; }
.stack { display: flex; flex-direction: column; gap: 1px; height: 45px; }
.stack .btn { flex: 1; }
.keys { width: 48px; }
.filters { width: 116px; gap: 2px; }
.combo-key { height: 21px; }
.play { width: 223px; }
.play-row { display: flex; align-items: center; height: 22px; }
.play-row .frame { flex: none; width: 64px; margin-left: 3px; }
.play-row .spin { margin: 0 1px; }
.taskbar { height: 2px; background: linear-gradient(90deg, #38a038 98px, #3088f0 98px); }
```
FILE: scene.js
```js
const NS = "http://www.w3.org/2000/svg";

function add(parent, name, attrs, text) {
  const el = document.createElementNS(NS, name);
  for (const key in attrs) el.setAttribute(key, attrs[key]);
  if (text !== undefined) el.textContent = text;
  parent.appendChild(el);
}

// Orthographic grids: minor lines, a major line every ten, black axes.
document.querySelectorAll(".grid").forEach((g) => {
  const cx = +g.dataset.cx, cy = +g.dataset.cy, step = +g.dataset.step;
  const paths = { minor: "", major: "", axis: "" };
  for (let i = -30; i <= 30; i++) {
    const kind = i === 0 ? "axis" : i % 10 === 0 ? "major" : "minor";
    paths[kind] += `M${cx + i * step} -200V1100M-200 ${cy + i * step}H1500`;
  }
  for (const kind in paths) add(g, "path", { class: kind, d: paths[kind] });
});

// Ground plane: the unit square projected onto four corner points.
const [p0, p1, p2, p3] = [[174, 352], [458, 582], [768, 480], [594, 177]];
const dx1 = p1[0] - p2[0], dx2 = p3[0] - p2[0], sx = p0[0] - p1[0] + p2[0] - p3[0];
const dy1 = p1[1] - p2[1], dy2 = p3[1] - p2[1], sy = p0[1] - p1[1] + p2[1] - p3[1];
const det = dx1 * dy2 - dx2 * dy1;
const gg = (sx * dy2 - dx2 * sy) / det, hh = (dx1 * sy - sx * dy1) / det;
function project(u, v) {
  const w = gg * u + hh * v + 1;
  const x = (p1[0] - p0[0] + gg * p1[0]) * u + (p3[0] - p0[0] + hh * p3[0]) * v + p0[0];
  const y = (p1[1] - p0[1] + gg * p1[1]) * u + (p3[1] - p0[1] + hh * p3[1]) * v + p0[1];
  return `${x / w} ${y / w}`;
}
let plane = "";
for (let i = 0; i <= 14; i++) {
  const t = i / 14;
  plane += `M${project(t, 0)}L${project(t, 1)}M${project(0, t)}L${project(1, t)}`;
}
add(document.querySelector(".persp-grid"), "path", { class: "plane", d: plane });

// Time ruler: a tick for each frame, a number for each tenth.
const ticks = document.querySelector(".ticks");
let marks = "";
for (let f = 0; f <= 100; f++) {
  const x = Math.round(93 + f * 6.945) + 0.5;
  if (f > 0) marks += `M${x} 664V674`;
  if (f % 10 === 0) {
    if (f > 0) marks += `M${x} 684V688`;
    add(ticks, "text", { x, y: 685 }, f);
  }
}
add(ticks, "path", { d: marks });
```
